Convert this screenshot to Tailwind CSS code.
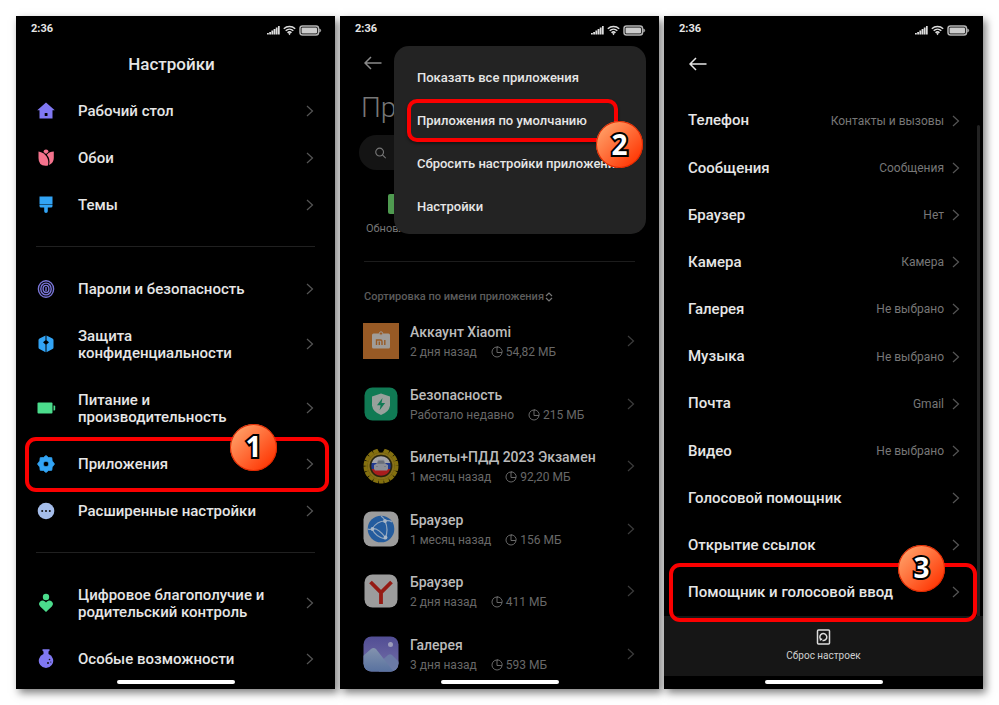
<!DOCTYPE html>
<html lang="ru">
<head>
    <meta charset="UTF-8">
    <meta name="viewport" content="width=device-width, initial-scale=1.0">
    <title>Настройки</title>
    <script src="https://cdn.jsdelivr.net/npm/@tailwindcss/browser@4"></script>
</head>
<body class="bg-white font-['Roboto','Noto_Sans',sans-serif] text-[#e6e6e6]">
    <!-- shared icons -->
    <svg class="hidden">
        <symbol id="chevron" viewBox="0 0 8 14"><path d="M1 2l5.500 5L1 12" fill="none" stroke="currentColor" stroke-width="1.200"/></symbol>
        <symbol id="arrow" viewBox="0 0 18 14"><path d="M17.500 7H1M7 1L1 7l6 6" fill="none" stroke="currentColor" stroke-width="1.500"/></symbol>
        <symbol id="pie" viewBox="0 0 12 12"><path d="M7 1.100A5 5 0 1 0 10.900 7M6 .800V6.500h5.200A5.200 5.200 0 0 0 6 .800" fill="none" stroke="currentColor" stroke-width="1"/></symbol>
        <symbol id="status" viewBox="0 0 56 12">
            <path d="M1 10.500h1.800V9H1zM3.200 10.500h1.800V8H3.200zM5.400 10.500h1.800V6.500H5.400zM7.600 10.500h1.800V5H7.600zM9.800 10.500h1.800V3.500H9.800zM12 10.500h1.700V2H12z" fill="#ddd"/>
            <g fill="none" stroke="#ddd" stroke-width="1.500"><path d="M17.800 4.700a8.500 8.500 0 0 1 11.400 0M19.700 6.800a5.600 5.600 0 0 1 7.600 0M21.500 8.800a3 3 0 0 1 4 0"/></g>
            <path d="M22.200 9.500q1.300-1 2.600 0L23.500 11.200z" fill="#ddd"/>
            <rect x="34" y="2" width="18.500" height="9" rx="2.500" fill="none" stroke="#b5b5b5" stroke-width="1.500"/>
            <rect x="35.500" y="3.500" width="15.500" height="6" rx="1" fill="#ccc"/>
            <path d="M53.700 4.800q2 1.700 0 3.400z" fill="#bbb" stroke="#bbb" stroke-width=".6"/>
        </symbol>
    </svg>

    <main class="grid min-h-screen grid-cols-3 gap-[5px] p-4">

        <!-- 1: settings -->
        <section class="relative flex flex-col overflow-clip bg-black shadow-[3px_4px_8px_rgba(0,0,0,0.5)]">
            <div class="flex h-[26px] items-center justify-between pt-px pr-[13px] pl-[15px] text-[11px] font-bold">2:36 <svg class="h-3 w-14"><use href="#status"/></svg></div>
            <h1 class="flex h-[45px] items-center justify-center pr-2 text-[17px] font-medium">Настройки</h1>
            <nav class="px-5 text-[15px] leading-[17px] font-medium">
                <a href="#" class="flex h-[47px] items-center">
                    <svg class="h-5 w-5" viewBox="0 0 20 20"><path d="M10 1.500l8.800 7.700H16.500v8.300h-13V9.200H1.200z" fill="#8078f2"/><rect x="8.700" y="12" width="2.800" height="3" rx=".6" fill="#000"/></svg>
                    <span class="ml-[22px] flex-1 pt-0.5">Рабочий стол</span>
                    <svg class="mr-px h-3.5 w-2 text-[#555]"><use href="#chevron"/></svg>
                </a>
                <a href="#" class="flex h-[47px] items-center">
                    <svg class="h-5 w-5" viewBox="0 0 20 20"><path d="M7.500 4a2.500 2.500 0 0 1 5 0L10 6z" fill="#f4728c"/><path d="M2.500 3.500Q8 4.500 10.500 8.500T12 17.500Q2.500 19 2.500 10z" fill="#f4728c"/><path d="M17.800 3.500Q13.500 3.500 10.800 6.700Q14.800 11 13 17Q17.800 15 17.800 10z" fill="#f4728c"/></svg>
                    <span class="ml-[22px] flex-1 pt-0.5">Обои</span>
                    <svg class="mr-px h-3.5 w-2 text-[#555]"><use href="#chevron"/></svg>
                </a>
                <a href="#" class="flex h-[47px] items-center">
                    <svg class="h-5 w-5" viewBox="0 0 20 20"><path d="M3.500 1.500h13v7.700h-13zM3.500 9.800h13v1.200q0 1.500-1.500 1.500h-3.200v3.700a1.800 1.800 0 0 1-3.600 0v-3.700H5q-1.500 0-1.500-1.500z" fill="#32a4f5"/></svg>
                    <span class="ml-[22px] flex-1 pt-0.5">Темы</span>
                    <svg class="mr-px h-3.5 w-2 text-[#555]"><use href="#chevron"/></svg>
                </a>
                <hr class="my-[18px] border-[#202020]">
                <a href="#" class="flex h-[47px] items-center">
                    <svg class="h-5 w-5" viewBox="0 0 20 20" fill="none" stroke="#7a76d8" stroke-width="1.400"><ellipse cx="10" cy="10" rx="7.600" ry="8.300"/><ellipse cx="10" cy="10" rx="5.200" ry="5.900"/><ellipse cx="10" cy="10" rx="2.900" ry="3.600"/><path d="M10 8v4.500"/></svg>
                    <span class="ml-[22px] flex-1 pt-0.5">Пароли и безопасность</span>
                    <svg class="mr-px h-3.5 w-2 text-[#555]"><use href="#chevron"/></svg>
                </a>
                <a href="#" class="flex h-16 items-center">
                    <svg class="h-5 w-5" viewBox="0 0 20 20"><path d="M9.500 1.500L3.500 4.500Q2.500 5 2.500 6v7.500q0 1 1 1.500l6 3.300V10.500L7 8.300l2.500-2zM10.500 1.500l6 3q1 .5 1 1.500v7.500q0 1-1 1.500l-6 3.300V10.500L13 8.300l-2.500-2z" fill="#32a4f5"/></svg>
                    <span class="ml-[22px] flex-1 pt-0.5">Защита<br>конфиденциальности</span>
                    <svg class="mr-px h-3.5 w-2 text-[#555]"><use href="#chevron"/></svg>
                </a>
                <a href="#" class="flex h-16 items-center">
                    <svg class="h-5 w-5" viewBox="0 0 20 20"><rect x="1.500" y="4.500" width="15" height="11" rx="1" fill="#4bdc8c"/><path d="M17.500 7.500h.7q1 0 1 1v3q0 1-1 1h-.7z" fill="#4bdc8c"/></svg>
                    <span class="ml-[22px] flex-1 pt-0.5">Питание и<br>производительность</span>
                    <svg class="mr-px h-3.5 w-2 text-[#555]"><use href="#chevron"/></svg>
                </a>
                <a href="#" class="relative flex h-[47px] items-center">
                    <svg class="h-5 w-5" viewBox="0 0 20 20"><path fill-rule="evenodd" d="M10 1.500l2.500 2 3.300.2.400 3.200 2.300 3.100-2.300 3.100-.4 3.200-3.300.2-2.500 2-2.500-2-3.300-.2-.4-3.200L1.500 10l2.300-3.100.4-3.200 3.300-.2zM10 7.200a2.800 2.800 0 1 0 0 5.600 2.800 2.800 0 0 0 0-5.600z" fill="#32a4f5" stroke="#32a4f5" stroke-width=".8" stroke-linejoin="round"/></svg>
                    <span class="ml-[22px] flex-1 pt-0.5">Приложения</span>
                    <svg class="mr-px h-3.5 w-2 text-[#555]"><use href="#chevron"/></svg>
                    <span class="absolute -top-[3px] -right-[14px] -bottom-[5px] -left-[11px] rounded-[11px] border-4 border-[#fb0000]"></span>
                    <b class="absolute -top-4 right-[38px] flex size-[47px] items-center justify-center rounded-full bg-[linear-gradient(135deg,#ff9a62_15%,#ff6a35_50%,#ff3300_90%)] pb-0.5 font-['Open_Sans'] text-[28px] font-bold text-white shadow-[0_0_0_1px_#e02800_inset] [-webkit-text-stroke:4px_black] [paint-order:stroke_fill]">1</b>
                </a>
                <a href="#" class="flex h-[47px] items-center">
                    <svg class="h-5 w-5" viewBox="0 0 20 20"><circle cx="10" cy="10" r="8.300" fill="#a5bdea"/><g fill="#111"><circle cx="6.200" cy="10" r="1"/><circle cx="10" cy="10" r="1"/><circle cx="13.800" cy="10" r="1"/></g></svg>
                    <span class="ml-[22px] flex-1 pt-0.5">Расширенные настройки</span>
                    <svg class="mr-px h-3.5 w-2 text-[#555]"><use href="#chevron"/></svg>
                </a>
                <hr class="my-[18px] border-[#202020]">
                <a href="#" class="flex h-16 items-center">
                    <svg class="h-5 w-5" viewBox="0 0 20 20" fill="#4bdc8c"><circle cx="10" cy="4" r="3.200"/><path d="M10 19l-5.800-5.600a3.300 3.300 0 0 1 4.800-4.800l1 1 1-1a3.300 3.300 0 0 1 4.800 4.800z"/></svg>
                    <span class="ml-[22px] flex-1 pt-0.5">Цифровое благополучие и<br>родительский контроль</span>
                    <svg class="mr-px h-3.5 w-2 text-[#555]"><use href="#chevron"/></svg>
                </a>
                <a href="#" class="flex h-[47px] items-center">
                    <svg class="h-5 w-5" viewBox="0 0 20 20"><path d="M6.500.300h7V1.800l-1 .8v2.400a7.200 7.200 0 1 1-5 0V2.600l-1-.8z" fill="#8078f2"/><g fill="#111"><circle cx="13.500" cy="10.500" r=".8"/><circle cx="12" cy="14" r="1"/><circle cx="14.800" cy="13" r=".6"/></g></svg>
                    <span class="ml-[22px] flex-1 pt-0.5">Особые возможности</span>
                    <svg class="mr-px h-3.5 w-2 text-[#555]"><use href="#chevron"/></svg>
                </a>
            </nav>
            <div class="absolute bottom-[5px] left-1/2 h-1 w-[118px] -translate-x-1/2 rounded-full bg-white"></div>
        </section>

        <!-- 2: apps, dimmed under the menu -->
        <section class="relative flex flex-col overflow-clip bg-black pb-1 shadow-[3px_4px_8px_rgba(0,0,0,0.5)]">
            <div class="flex h-[26px] items-center justify-between pt-px pr-[13px] pl-[15px] text-[11px] font-bold">2:36 <svg class="h-3 w-14"><use href="#status"/></svg></div>
            <div class="flex h-[42px] items-center pl-6">
                <button aria-label="Назад" class="text-[#8a8a8a]"><svg class="h-3.5 w-[18px]"><use href="#arrow"/></svg></button>
            </div>
            <h1 class="flex h-[46px] items-center pt-0.5 pl-[21px] text-[28px] font-light text-[#777]">Приложения</h1>
            <label class="mx-[19px] mt-[5px] flex h-[35px] items-center gap-2 rounded-full bg-[#141414] pl-4 text-[#777]">
                <svg class="h-3 w-3" viewBox="0 0 12 12" fill="none" stroke="currentColor" stroke-width="1.200"><circle cx="5" cy="5" r="4.200"/><path d="M8 8l3.600 3.600"/></svg>
                <input type="search" aria-label="Поиск" class="w-full min-w-0 bg-transparent text-[13px] outline-none">
            </label>
            <div class="mt-6 flex pr-5 pl-[26px] text-[11px] leading-4 whitespace-nowrap text-[#777]">
                <a href="#" class="flex flex-col items-center gap-[7px]"><span class="h-5 w-5 rounded-xs bg-[#4f9a50]"></span>Обновление</a>
                <a href="#" class="ml-3 flex flex-col items-center gap-[7px]"><span class="h-5 w-5 rounded-xs bg-[#4f6f9a]"></span>Удаление</a>
                <a href="#" class="ml-auto flex flex-col items-center gap-[7px]"><span class="h-5 w-5 rounded-xs bg-[#9a7a4f]"></span>Двойные приложения</a>
            </div>
            <hr class="mx-6 mt-6 border-[#1c1c1c]">
            <button class="mx-6 mt-5 flex h-7 items-center gap-px pt-0.5 text-[11px] font-medium text-[#5c5c5c]">
                Сортировка по имени приложения
                <svg class="h-2.5 w-2" viewBox="0 0 8 10" fill="none" stroke="#777" stroke-width="1.200"><path d="M1 4l3-3 3 3M1 6l3 3 3-3"/></svg>
            </button>
            <div class="flex flex-1 flex-col px-6 text-[12px] leading-4 text-[#686868]">
                <a href="#" class="flex flex-1 items-center gap-[11px]">
                    <svg class="-ml-px h-9 w-9" viewBox="0 0 36 36"><path d="M0 0h36v36H0z" fill="#985a25"/><rect x="9" y="10.500" width="18" height="15" rx="1.500" fill="#a09c98"/><circle cx="18" cy="10.500" r="1.700" fill="#985a25" stroke="#a09c98"/><path d="M13.500 22v-5h4q1.500 0 1.500 1.500V22M16.300 18.500V22M21.800 17v5" fill="none" stroke="#985a25" stroke-width="1.400"/></svg>
                    <div class="flex-1 pt-0.5">
                        <h2 class="mb-1 text-[14px] font-medium text-[#bbb]">Аккаунт Xiaomi</h2>
                        <p class="flex items-center">2 дня назад <svg class="mr-[3px] ml-[14px] h-3 w-3"><use href="#pie"/></svg>54,82 МБ</p>
                    </div>
                    <svg class="h-3.5 w-2 text-[#3c3c3c]"><use href="#chevron"/></svg>
                </a>
                <a href="#" class="flex flex-1 items-center gap-[11px]">
                    <svg class="-ml-px h-9 w-9" viewBox="0 0 36 36"><rect x="1.500" y="1.500" width="33" height="33" rx="8" fill="#107a54"/><path d="M18 7.500l9 3v9q-1 6.500-9 9.500-8-3-9-9.500v-9z" fill="#98a19c"/><path d="M19.500 12l-5.500 7.200h3.600l-1 5 5.500-7.200h-3.600z" fill="#107a54"/></svg>
                    <div class="flex-1 pt-0.5">
                        <h2 class="mb-1 text-[14px] font-medium text-[#bbb]">Безопасность</h2>
                        <p class="flex items-center">Работало недавно <svg class="mr-[3px] ml-[14px] h-3 w-3"><use href="#pie"/></svg>215 МБ</p>
                    </div>
                    <svg class="h-3.5 w-2 text-[#3c3c3c]"><use href="#chevron"/></svg>
                </a>
                <a href="#" class="flex flex-1 items-center gap-[11px]">
                    <svg class="-ml-px h-9 w-9" viewBox="0 0 36 36">
                        <circle cx="18" cy="18" r="15.500" fill="#66540c"/>
                        <circle cx="18" cy="18" r="15.500" fill="none" stroke="#84700f" stroke-width="4" stroke-dasharray="4.800 .6"/>
                        <circle cx="18" cy="18" r="12.300" fill="none" stroke="#86701a" stroke-width="2"/>
                        <circle cx="18" cy="18" r="11.300" fill="#27240f"/>
                        <path d="M14 0h8l-2.500 4.500h-3z" fill="#000"/>
                        <path d="M8.700 15a9.800 9.800 0 0 1 18.600 0z" fill="#a5a5aa"/>
                        <path d="M8.700 15h18.600q.9 3 0 6H8.700q-.9-3 0-6z" fill="#20388f"/>
                        <path d="M8.700 21h18.600a9.800 9.800 0 0 1-18.600 0z" fill="#a91d1d"/>
                        <path d="M11 21v-4l2.500-1.200 1.500-4h6l1.500 4L25 17v4l-1 1.500H12z" fill="#8d8f98"/>
                        <path d="M14.500 15.500l1-2.500h5l1 2.500zM13 18.500h2M21 18.500h2" fill="#6a6e7a" stroke="#6a6e7a" stroke-width=".6"/>
                    </svg>
                    <div class="flex-1 pt-0.5">
                        <h2 class="mb-1 text-[14px] font-medium text-[#bbb]">Билеты+ПДД 2023 Экзамен</h2>
                        <p class="flex items-center">1 месяц назад <svg class="mr-[3px] ml-[14px] h-3 w-3"><use href="#pie"/></svg>92,20 МБ</p>
                    </div>
                    <svg class="h-3.5 w-2 text-[#3c3c3c]"><use href="#chevron"/></svg>
                </a>
                <a href="#" class="flex flex-1 items-center gap-[11px]">
                    <svg class="-ml-px h-9 w-9" viewBox="0 0 36 36"><rect x=".5" y=".5" width="35" height="35" rx="8" fill="#9c9c9c"/><circle cx="18" cy="18" r="13.300" fill="#245c9e"/><g fill="none" stroke="#94a8bf" stroke-width="1.200"><path d="M22 10Q14 10 9 18Q13 26 22 28M22 10q4 9 0 18M9 18q5-2 13 8M22 10q4-1 7 1M9 18q-2 1-4 0M22 10q-1-3-4-5"/></g><g fill="#a9b7c7"><circle cx="22" cy="10" r="1.900"/><circle cx="9.500" cy="18" r="1.900"/><circle cx="22.500" cy="26.500" r="1.900"/></g></svg>
                    <div class="flex-1 pt-0.5">
                        <h2 class="mb-1 text-[14px] font-medium text-[#bbb]">Браузер</h2>
                        <p class="flex items-center">1 месяц назад <svg class="mr-[3px] ml-[14px] h-3 w-3"><use href="#pie"/></svg>156 МБ</p>
                    </div>
                    <svg class="h-3.5 w-2 text-[#3c3c3c]"><use href="#chevron"/></svg>
                </a>
                <a href="#" class="flex flex-1 items-center gap-[11px]">
                    <svg class="-ml-px h-9 w-9" viewBox="0 0 36 36"><rect x="1.500" y="1.500" width="33" height="33" rx="8" fill="#9c9c9c"/><path d="M7.500 9l10.500 10.500L28.500 9M18 19v12" fill="none" stroke="#951b14" stroke-width="3.800"/></svg>
                    <div class="flex-1 pt-0.5">
                        <h2 class="mb-1 text-[14px] font-medium text-[#bbb]">Браузер</h2>
                        <p class="flex items-center">2 дня назад <svg class="mr-[3px] ml-[14px] h-3 w-3"><use href="#pie"/></svg>411 МБ</p>
                    </div>
                    <svg class="h-3.5 w-2 text-[#3c3c3c]"><use href="#chevron"/></svg>
                </a>
                <a href="#" class="flex flex-1 items-center gap-[11px]">
                    <svg class="-ml-px h-9 w-9" viewBox="0 0 36 36">
                        <defs>
                            <linearGradient id="sky" x1="0" y1="0" x2="0" y2="1"><stop offset="0" stop-color="#514d94"/><stop offset="1" stop-color="#7570a8"/></linearGradient>
                            <linearGradient id="hill" x1="0" y1="0" x2="0" y2="1"><stop offset="0" stop-color="#8393ae"/><stop offset="1" stop-color="#58719f"/></linearGradient>
                            <clipPath id="tile"><rect x=".5" y=".5" width="35" height="35" rx="8"/></clipPath>
                        </defs>
                        <g clip-path="url(#tile)"><path d="M0 0h36v36H0z" fill="url(#sky)"/><path d="M16 27l9-8q2-1.500 4 0l7 7v10H16z" fill="#6b7aa6"/><path d="M0 20l8-7q2.500-2 5 0l18 23H0z" fill="url(#hill)"/></g>
                        <circle cx="27.500" cy="8.500" r="2.500" fill="#9c9cbb"/>
                    </svg>
                    <div class="flex-1 pt-0.5">
                        <h2 class="mb-1 text-[14px] font-medium text-[#bbb]">Галерея</h2>
                        <p class="flex items-center">3 дня назад <svg class="mr-[3px] ml-[14px] h-3 w-3"><use href="#pie"/></svg>593 МБ</p>
                    </div>
                    <svg class="h-3.5 w-2 text-[#3c3c3c]"><use href="#chevron"/></svg>
                </a>
            </div>
            <!-- popup menu -->
            <div class="absolute top-[30px] right-[13px] flex w-[252px] flex-col rounded-[15px] bg-[#232323] pt-2.5 pb-1.5 text-[13px] font-medium">
                <button class="h-[43px] px-[23px] text-left">Показать все приложения</button>
                <button class="relative h-[43px] px-[23px] text-left">Приложения по умолчанию
                    <span class="absolute inset-y-0 right-7 left-[13px] rounded-[10px] border-4 border-[#fb0000] shadow-[0_2px_3px_rgba(0,0,0,0.4)]"></span>
                </button>
                <button class="h-[43px] truncate px-[23px] text-left">Сбросить настройки приложений</button>
                <button class="h-[43px] px-[23px] text-left">Настройки</button>
                <b class="absolute top-[75px] right-[3px] flex size-[47px] items-center justify-center rounded-full bg-[linear-gradient(135deg,#ff9a62_15%,#ff6a35_50%,#ff3300_90%)] pb-0.5 font-['Open_Sans'] text-[28px] font-bold text-white shadow-[0_0_0_1px_#e02800_inset] [-webkit-text-stroke:4px_black] [paint-order:stroke_fill]">2</b>
            </div>
            <div class="absolute bottom-[5px] left-1/2 h-1 w-[118px] -translate-x-1/2 rounded-full bg-white"></div>
        </section>

        <!-- 3: default apps -->
        <section class="relative flex flex-col overflow-clip bg-black pb-[13px] shadow-[3px_4px_8px_rgba(0,0,0,0.5)]">
            <div class="flex h-[26px] items-center justify-between pt-px pr-[13px] pl-[15px] text-[11px] font-bold">2:36 <svg class="h-3 w-14"><use href="#status"/></svg></div>
            <div class="flex h-[55px] items-start pt-[15px] pl-[25px]">
                <button aria-label="Назад"><svg class="h-3.5 w-[18px]"><use href="#arrow"/></svg></button>
            </div>
            <nav class="relative flex flex-1 flex-col pr-[23px] pl-6 text-[15px] font-medium">
                <a href="#" class="flex flex-1 items-center">Телефон <span class="mr-2 ml-auto text-[12px] font-normal text-[#777]">Контакты и вызовы</span><svg class="h-3.5 w-2 text-[#555]"><use href="#chevron"/></svg></a>
                <a href="#" class="flex flex-1 items-center">Сообщения <span class="mr-2 ml-auto text-[12px] font-normal text-[#777]">Сообщения</span><svg class="h-3.5 w-2 text-[#555]"><use href="#chevron"/></svg></a>
                <a href="#" class="flex flex-1 items-center">Браузер <span class="mr-2 ml-auto text-[12px] font-normal text-[#777]">Нет</span><svg class="h-3.5 w-2 text-[#555]"><use href="#chevron"/></svg></a>
                <a href="#" class="flex flex-1 items-center">Камера <span class="mr-2 ml-auto text-[12px] font-normal text-[#777]">Камера</span><svg class="h-3.5 w-2 text-[#555]"><use href="#chevron"/></svg></a>
                <a href="#" class="flex flex-1 items-center">Галерея <span class="mr-2 ml-auto text-[12px] font-normal text-[#777]">Не выбрано</span><svg class="h-3.5 w-2 text-[#555]"><use href="#chevron"/></svg></a>
                <a href="#" class="flex flex-1 items-center">Музыка <span class="mr-2 ml-auto text-[12px] font-normal text-[#777]">Не выбрано</span><svg class="h-3.5 w-2 text-[#555]"><use href="#chevron"/></svg></a>
                <a href="#" class="flex flex-1 items-center">Почта <span class="mr-2 ml-auto text-[12px] font-normal text-[#777]">Gmail</span><svg class="h-3.5 w-2 text-[#555]"><use href="#chevron"/></svg></a>
                <a href="#" class="flex flex-1 items-center">Видео <span class="mr-2 ml-auto text-[12px] font-normal text-[#777]">Не выбрано</span><svg class="h-3.5 w-2 text-[#555]"><use href="#chevron"/></svg></a>
                <a href="#" class="flex flex-1 items-center justify-between">Голосовой помощник <svg class="h-3.5 w-2 text-[#555]"><use href="#chevron"/></svg></a>
                <a href="#" class="flex flex-1 items-center justify-between">Открытие ссылок <svg class="h-3.5 w-2 text-[#555]"><use href="#chevron"/></svg></a>
                <a href="#" class="relative z-10 flex flex-1 items-center justify-between">Помощник и голосовой ввод <svg class="h-3.5 w-2 text-[#555]"><use href="#chevron"/></svg>
                    <span class="absolute -top-[6px] -right-[17px] -bottom-[6px] -left-[19px] rounded-[11px] border-4 border-[#fb0000]"></span>
                    <b class="absolute -top-6 right-[15px] flex size-[47px] items-center justify-center rounded-full bg-[linear-gradient(135deg,#ff9a62_15%,#ff6a35_50%,#ff3300_90%)] pb-0.5 font-['Open_Sans'] text-[28px] font-bold text-white shadow-[0_0_0_1px_#e02800_inset] [-webkit-text-stroke:4px_black] [paint-order:stroke_fill]">3</b>
                </a>
                <div class="absolute top-7 right-[3px] bottom-0 w-[3px] rounded-t-full bg-[#222]"></div>
            </nav>
            <button class="flex h-[60px] flex-col items-center bg-[#161616] pt-[13px] text-[10px] leading-4 text-[#d0d0d0]">
                <svg class="mb-[3px] h-4 w-4" viewBox="0 0 16 16" fill="none" stroke="#ddd" stroke-width="1.500"><rect x="1.500" y="1" width="12" height="14" rx="1"/><path d="M4.700 10.300A3.500 3.500 0 1 1 6.500 11.400M4.200 11.500l.5-1.500 1.500.5"/></svg>
                Сброс настроек
            </button>
            <div class="absolute bottom-[5px] left-1/2 h-1 w-[118px] -translate-x-1/2 rounded-full bg-white"></div>
        </section>
    </main>
</body>
</html>
